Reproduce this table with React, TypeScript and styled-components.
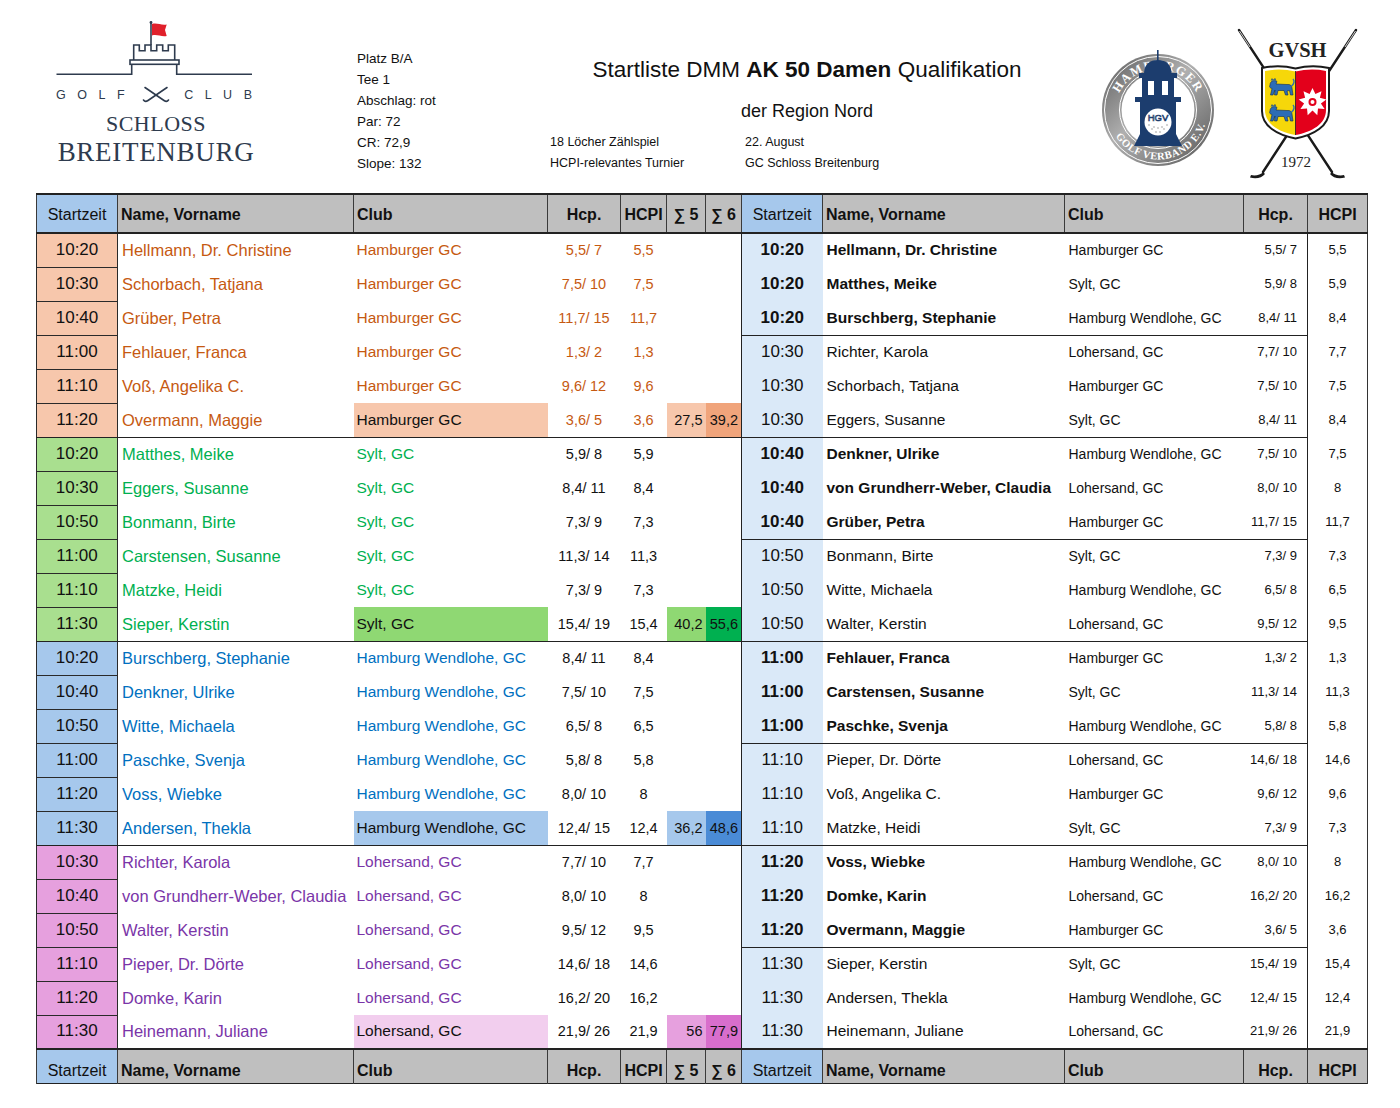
import styled, { createGlobalStyle } from "styled-components";

const GlobalStyle = createGlobalStyle`
  html, body {
    margin: 0;
    padding: 0;
    background: #ffffff;
  }
  body {
    font-family: "Liberation Sans", Arial, sans-serif;
    color: #111111;
  }
`;

type Entry = [string, string, string, string, string];

interface Tone {
  time: string;
  text: string;
  num: string;
  club: string;
  s5: string;
  s6: string;
}

const tones: Record<string, Tone> = {
  orange: { time: "#F7C7AC", text: "#C65911", num: "#C65911", club: "#F7C7AC", s5: "#F7C7AC", s6: "#F0A47B" },
  green: { time: "#A9DF8F", text: "#00B050", num: "#111111", club: "#8FD873", s5: "#8FD873", s6: "#00B050" },
  blue: { time: "#A6C8EC", text: "#0070C0", num: "#111111", club: "#A6C8EC", s5: "#A6C8EC", s6: "#4A8BD6" },
  pink: { time: "#E6A0DE", text: "#7A35A8", num: "#111111", club: "#F2CEEE", s5: "#E6A0DE", s6: "#D86ECC" },
};

const groups: { tone: Tone; rows: Entry[]; s5: string; s6: string }[] = [
  {
    tone: tones.orange,
    s5: "27,5",
    s6: "39,2",
    rows: [
      ["10:20", "Hellmann, Dr. Christine", "Hamburger GC", "5,5/ 7", "5,5"],
      ["10:30", "Schorbach, Tatjana", "Hamburger GC", "7,5/ 10", "7,5"],
      ["10:40", "Grüber, Petra", "Hamburger GC", "11,7/ 15", "11,7"],
      ["11:00", "Fehlauer, Franca", "Hamburger GC", "1,3/ 2", "1,3"],
      ["11:10", "Voß, Angelika C.", "Hamburger GC", "9,6/ 12", "9,6"],
      ["11:20", "Overmann, Maggie", "Hamburger GC", "3,6/ 5", "3,6"],
    ],
  },
  {
    tone: tones.green,
    s5: "40,2",
    s6: "55,6",
    rows: [
      ["10:20", "Matthes, Meike", "Sylt, GC", "5,9/ 8", "5,9"],
      ["10:30", "Eggers, Susanne", "Sylt, GC", "8,4/ 11", "8,4"],
      ["10:50", "Bonmann, Birte", "Sylt, GC", "7,3/ 9", "7,3"],
      ["11:00", "Carstensen, Susanne", "Sylt, GC", "11,3/ 14", "11,3"],
      ["11:10", "Matzke, Heidi", "Sylt, GC", "7,3/ 9", "7,3"],
      ["11:30", "Sieper, Kerstin", "Sylt, GC", "15,4/ 19", "15,4"],
    ],
  },
  {
    tone: tones.blue,
    s5: "36,2",
    s6: "48,6",
    rows: [
      ["10:20", "Burschberg, Stephanie", "Hamburg Wendlohe, GC", "8,4/ 11", "8,4"],
      ["10:40", "Denkner, Ulrike", "Hamburg Wendlohe, GC", "7,5/ 10", "7,5"],
      ["10:50", "Witte, Michaela", "Hamburg Wendlohe, GC", "6,5/ 8", "6,5"],
      ["11:00", "Paschke, Svenja", "Hamburg Wendlohe, GC", "5,8/ 8", "5,8"],
      ["11:20", "Voss, Wiebke", "Hamburg Wendlohe, GC", "8,0/ 10", "8"],
      ["11:30", "Andersen, Thekla", "Hamburg Wendlohe, GC", "12,4/ 15", "12,4"],
    ],
  },
  {
    tone: tones.pink,
    s5: "56",
    s6: "77,9",
    rows: [
      ["10:30", "Richter, Karola", "Lohersand, GC", "7,7/ 10", "7,7"],
      ["10:40", "von Grundherr-Weber, Claudia", "Lohersand, GC", "8,0/ 10", "8"],
      ["10:50", "Walter, Kerstin", "Lohersand, GC", "9,5/ 12", "9,5"],
      ["11:10", "Pieper, Dr. Dörte", "Lohersand, GC", "14,6/ 18", "14,6"],
      ["11:20", "Domke, Karin", "Lohersand, GC", "16,2/ 20", "16,2"],
      ["11:30", "Heinemann, Juliane", "Lohersand, GC", "21,9/ 26", "21,9"],
    ],
  },
];

const byTime: Entry[] = [
  ["10:20", "Hellmann, Dr. Christine", "Hamburger GC", "5,5/ 7", "5,5"],
  ["10:20", "Matthes, Meike", "Sylt, GC", "5,9/ 8", "5,9"],
  ["10:20", "Burschberg, Stephanie", "Hamburg Wendlohe, GC", "8,4/ 11", "8,4"],
  ["10:30", "Richter, Karola", "Lohersand, GC", "7,7/ 10", "7,7"],
  ["10:30", "Schorbach, Tatjana", "Hamburger GC", "7,5/ 10", "7,5"],
  ["10:30", "Eggers, Susanne", "Sylt, GC", "8,4/ 11", "8,4"],
  ["10:40", "Denkner, Ulrike", "Hamburg Wendlohe, GC", "7,5/ 10", "7,5"],
  ["10:40", "von Grundherr-Weber, Claudia", "Lohersand, GC", "8,0/ 10", "8"],
  ["10:40", "Grüber, Petra", "Hamburger GC", "11,7/ 15", "11,7"],
  ["10:50", "Bonmann, Birte", "Sylt, GC", "7,3/ 9", "7,3"],
  ["10:50", "Witte, Michaela", "Hamburg Wendlohe, GC", "6,5/ 8", "6,5"],
  ["10:50", "Walter, Kerstin", "Lohersand, GC", "9,5/ 12", "9,5"],
  ["11:00", "Fehlauer, Franca", "Hamburger GC", "1,3/ 2", "1,3"],
  ["11:00", "Carstensen, Susanne", "Sylt, GC", "11,3/ 14", "11,3"],
  ["11:00", "Paschke, Svenja", "Hamburg Wendlohe, GC", "5,8/ 8", "5,8"],
  ["11:10", "Pieper, Dr. Dörte", "Lohersand, GC", "14,6/ 18", "14,6"],
  ["11:10", "Voß, Angelika C.", "Hamburger GC", "9,6/ 12", "9,6"],
  ["11:10", "Matzke, Heidi", "Sylt, GC", "7,3/ 9", "7,3"],
  ["11:20", "Voss, Wiebke", "Hamburg Wendlohe, GC", "8,0/ 10", "8"],
  ["11:20", "Domke, Karin", "Lohersand, GC", "16,2/ 20", "16,2"],
  ["11:20", "Overmann, Maggie", "Hamburger GC", "3,6/ 5", "3,6"],
  ["11:30", "Sieper, Kerstin", "Sylt, GC", "15,4/ 19", "15,4"],
  ["11:30", "Andersen, Thekla", "Hamburg Wendlohe, GC", "12,4/ 15", "12,4"],
  ["11:30", "Heinemann, Juliane", "Lohersand, GC", "21,9/ 26", "21,9"],
];

const colWidths = [81, 236, 194, 73, 46, 39, 36, 81, 242, 179, 64, 60];

/* ---------- header area ---------- */

const Page = styled.div`
  width: 1400px;
  min-height: 1108px;
`;

const Top = styled.header`
  display: flex;
  height: 193px;
`;

const ClubLogo = styled.div`
  width: 200px;
  margin: 18px 101px 0 56px;
  display: flex;
  flex-direction: column;
  align-items: center;
  color: #2e3b4e;
`;

const GolfLine = styled.div`
  display: flex;
  align-items: center;
  justify-content: space-between;
  width: 196px;
  height: 18px;
  margin: 10px 4px 0 0;
  font-family: "Liberation Sans", Arial, sans-serif;
  font-size: 12.5px;
  letter-spacing: 11.5px;
  line-height: 18px;

  & > svg {
    margin-left: -8px;
  }
  & > span:last-child {
    margin-right: -11.5px;
  }
`;

const Schloss = styled.div`
  margin-top: 8px;
  font-family: "Liberation Serif", "DejaVu Serif", serif;
  font-size: 22px;
  line-height: 24px;
  letter-spacing: 0.5px;
`;

const Breitenburg = styled.div`
  margin-top: 0.5px;
  font-family: "Liberation Serif", "DejaVu Serif", serif;
  font-size: 27px;
  line-height: 30px;
  letter-spacing: 0.7px;
`;

const Info = styled.div`
  width: 192px;
  padding-top: 48px;
  font-size: 13.5px;
  line-height: 21px;
`;

const Center = styled.div`
  width: 516px;
  display: flex;
  flex-direction: column;
  align-items: center;
`;

const Title = styled.h1`
  margin: 56px 0 0;
  font-size: 22.5px;
  line-height: 28px;
  font-weight: 400;

  & b {
    font-weight: 700;
  }
`;

const Subtitle = styled.div`
  margin-top: 15px;
  font-size: 18px;
  line-height: 24px;
`;

const Facts = styled.div`
  align-self: stretch;
  display: grid;
  grid-template-columns: 195px 1fr;
  margin-top: 9px;
  padding-left: 1px;
  font-size: 12.5px;
  line-height: 21px;
`;

const Logos = styled.div`
  display: flex;
  align-items: flex-start;
  margin-left: 35px;
  gap: 20px;
`;

const HgvMark = styled.svg`
  margin-top: 50px;
`;

const GvshMark = styled.svg`
  margin-top: 26px;
`;

/* ---------- table ---------- */

const Sheet = styled.table`
  border-collapse: collapse;
  table-layout: fixed;
  width: 1331px;
  margin-left: 36px;
  border: 1px solid #333333;
  font-family: "Liberation Sans", Arial, sans-serif;
  color: #111111;
`;

const HeadRow = styled.tr<{ $foot?: boolean }>`
  height: ${(p) => (p.$foot ? 34 : 39)}px;
  border-bottom: ${(p) => (p.$foot ? "1px" : "2px")} solid #222222;
  border-top: 2px solid #222222;

  & > th {
    padding-bottom: ${(p) => (p.$foot ? 2 : 7)}px;
  }
`;

const Th = styled.th<{ $time?: boolean; $left?: boolean }>`
  padding: 0 3px;
  vertical-align: bottom;
  background: ${(p) => (p.$time ? "#A6C8EC" : "#BFBFBF")};
  border-left: 1px solid #3a3a3a;
  border-right: 1px solid #3a3a3a;
  font-size: 16px;
  line-height: 20px;
  font-weight: ${(p) => (p.$time ? 400 : 700)};
  text-align: ${(p) => (p.$left ? "left" : "center")};
  white-space: nowrap;
  overflow: hidden;
`;

const BodyRow = styled.tr<{ $leftEnd: boolean; $rightEnd: boolean }>`
  height: 34px;

  & > td:nth-child(-n + 7) {
    border-bottom: ${(p) => (p.$leftEnd ? "1px solid #222222" : "0")};
  }
  & > td:nth-child(n + 8):nth-child(-n + 11) {
    border-bottom: ${(p) => (p.$rightEnd ? "1px solid #222222" : "0")};
  }
  & > td:nth-child(7),
  & > td:nth-child(11) {
    border-right: 1px solid #222222;
  }
`;

const Cell = styled.td`
  padding: 0 4px 7px;
  vertical-align: bottom;
  white-space: nowrap;
  overflow: hidden;
  line-height: 20px;
`;

const LTime = styled(Cell)<{ $bg: string }>`
  && {
    border: 1px solid #2a2a2a;
  }
  background: ${(p) => p.$bg};
  font-size: 17px;
  text-align: center;
`;

const LName = styled(Cell)<{ $color: string }>`
  color: ${(p) => p.$color};
  font-size: 16.5px;
`;

const LClub = styled(Cell)<{ $color: string; $bg?: string }>`
  padding-left: 3px;
  color: ${(p) => (p.$bg ? "#111111" : p.$color)};
  background: ${(p) => p.$bg ?? "transparent"};
  font-size: 15.5px;
`;

const LNum = styled(Cell)<{ $color: string }>`
  color: ${(p) => p.$color};
  font-size: 14.5px;
  text-align: center;
`;

const LSum = styled(Cell)<{ $bg?: string }>`
  padding-right: 3px;
  background: ${(p) => p.$bg ?? "transparent"};
  font-size: 14.5px;
  text-align: right;
`;

const RTime = styled(Cell)<{ $bold: boolean }>`
  background: #dae9f8;
  font-size: 17px;
  font-weight: ${(p) => (p.$bold ? 700 : 400)};
  text-align: center;
`;

const RName = styled(Cell)<{ $bold: boolean }>`
  font-size: 15.5px;
  font-weight: ${(p) => (p.$bold ? 700 : 400)};
`;

const RClub = styled(Cell)`
  font-size: 14px;
`;

const RHcp = styled(Cell)`
  padding-right: 10px;
  font-size: 13px;
  text-align: right;
`;

const RHcpi = styled(Cell)`
  font-size: 13px;
  text-align: center;
`;

/* ---------- drawings ---------- */

const Castle = () => (
  <svg width="200" height="58" viewBox="0 0 200 58">
    <g fill="none" stroke="#2e3b4e" strokeWidth="1.6">
      <path d="M0.5 56.3 H75.7 V46.3 M120.7 46.3 V56.3 H196" />
      <rect x="74" y="42" width="49" height="4.3" />
      <path d="M77.7 42 V27 H83.3 V32.7 H89 V27 H95 V32.7 H100.7 V27 H106.7 V32.7 H112.3 V27 H118.7 V42" />
      <path d="M95 27 V5" />
    </g>
    <circle cx="95" cy="4.5" r="1.4" fill="#2e3b4e" />
    <path d="M96 6 C101 4.5 105 7.5 110.7 6.5 L109 12 L110.7 18 C105 19 101 16 96 17.5 Z" fill="#e0202b" />
  </svg>
);

const CrossedClubs = () => (
  <svg width="30" height="18" viewBox="0 0 30 18">
    <g fill="none" stroke="#2e3b4e" strokeWidth="1.6" strokeLinecap="round">
      <path d="M4 1.5 L23 14.5 C24.5 15.5 26.5 15.5 27.5 14" />
      <path d="M26 1.5 L7 14.5 C5.5 15.5 3.5 15.5 2.5 14" />
    </g>
  </svg>
);

const HgvLogo = () => (
  <HgvMark width="116" height="120" viewBox="0 0 116 120">
    <defs>
      <linearGradient id="hgvRing" x1="0" y1="0" x2="1" y2="1">
        <stop offset="0" stopColor="#5a5a5a" />
        <stop offset="0.45" stopColor="#b0b0b0" />
        <stop offset="0.7" stopColor="#878787" />
        <stop offset="1" stopColor="#565656" />
      </linearGradient>
      <path id="hgvTop" d="M15 62 A43 43 0 0 1 101 62" />
      <path id="hgvBottom" d="M8.5 60 A49.5 49.5 0 0 0 107.5 60" />
    </defs>
    <circle cx="58" cy="60" r="56" fill="url(#hgvRing)" />
    <circle cx="58" cy="60" r="53.5" fill="none" stroke="#ffffff" strokeWidth="1" />
    <circle cx="58" cy="60" r="38.5" fill="none" stroke="#ffffff" strokeWidth="1" />
    <circle cx="58" cy="60" r="36.5" fill="#ffffff" />
    <text fontFamily="'Liberation Serif', serif" fontWeight="700" fontSize="12.5" fill="#ffffff" letterSpacing="1.4">
      <textPath href="#hgvTop" startOffset="50%" textAnchor="middle">HAMBURGER</textPath>
    </text>
    <text fontFamily="'Liberation Serif', serif" fontWeight="700" fontSize="10.5" fill="#ffffff" letterSpacing="0.5">
      <textPath href="#hgvBottom" startOffset="54%" textAnchor="middle">GOLF VERBAND E.V.</textPath>
    </text>
    <g fill="#1c3d6e">
      <rect x="57" y="0" width="1.6" height="14" />
      <path d="M44 24 C44 14 50 10 57.8 10 C65.6 10 71.6 14 71.6 24 Z" />
      <rect x="39" y="23" width="38" height="5" />
      <rect x="42" y="28" width="32" height="20" />
      <rect x="35" y="47" width="46" height="5" />
      <path d="M40 52 H76 V84 L82 96 H34 L40 84 Z" />
    </g>
    <rect x="48" y="31" width="6" height="14" fill="#ffffff" />
    <rect x="62" y="31" width="6" height="14" fill="#ffffff" />
    <circle cx="58" cy="72" r="13.5" fill="#ffffff" />
    <g fill="#c8c8c8">
      <circle cx="52" cy="79" r="1.1" />
      <circle cx="56" cy="82" r="1.1" />
      <circle cx="60" cy="82" r="1.1" />
      <circle cx="64" cy="79" r="1.1" />
      <circle cx="49" cy="75" r="1.1" />
      <circle cx="67" cy="75" r="1.1" />
      <circle cx="54" cy="77" r="1.1" />
      <circle cx="58" cy="78" r="1.1" />
      <circle cx="62" cy="77" r="1.1" />
    </g>
    <text x="58" y="71" textAnchor="middle" fontFamily="'Liberation Sans', sans-serif" fontSize="9.5" fill="#ffffff" stroke="#1c3d6e" strokeWidth="0.7">HGV</text>
  </HgvMark>
);

const Lion = ({ x, y }: { x: number; y: number }) => (
  <g transform={`translate(${x} ${y})`}>
    <path
      d="M3 7 C3 3 7 1.5 10 3.5 L9 6 L20 6.5 C23 6 25 7.5 25 10 L26 17 L23.5 17 L22.5 12.5 L20 13 L21 17 L18.5 17 L17 12.5 L11 12.5 L10 17 L7.5 17 L8 12 L6 17 L3.5 17 L5 10.5 C3 10 2 9 3 7 Z"
      fill="#2c6cb5"
      stroke="#0f2c55"
      strokeWidth="0.6"
    />
    <path d="M24.5 8 C27 6 28 3 26 1" fill="none" stroke="#2c6cb5" strokeWidth="1.4" />
    <path d="M4 2.5 L5 0.5 L6.5 2 L8 0.3 L9 2.5" fill="#2c6cb5" stroke="#0f2c55" strokeWidth="0.4" />
  </g>
);

const nettle = (() => {
  const pts: string[] = [];
  const n = 18;
  for (let i = 0; i < n; i++) {
    const a = (i / n) * Math.PI * 2 - Math.PI / 2;
    const r = i % 2 === 0 ? 14 : 8.5;
    pts.push(`${(76.5 + Math.cos(a) * r).toFixed(1)},${(76 + Math.sin(a) * r).toFixed(1)}`);
  }
  return pts.join(" ");
})();

const GvshLogo = () => (
  <GvshMark width="124" height="160" viewBox="0 0 124 160">
    <defs>
      <clipPath id="shieldClip">
        <path d="M29 45 Q44 42 59.5 45.5 Q75 42 90 45 V84 C90 98 76 106 59.5 109 C43 106 29 98 29 84 Z" />
      </clipPath>
    </defs>
    <g fill="none" stroke="#1a1a1a" strokeWidth="2.4" strokeLinecap="round">
      <path d="M3 4 L96 146" />
      <path d="M120 4 L27 146" />
    </g>
    <g fill="none" stroke="#ffffff" strokeWidth="0.8">
      <path d="M3.5 5 L14 21" />
      <path d="M119.5 5 L109 21" />
    </g>
    <path d="M96 146 C98 149 104 150 108 149 L109 151.5 C103 153 97 152 94 148 Z" fill="#1a1a1a" />
    <path d="M27 146 C25 149 19 150 15 149 L14 151.5 C20 153 26 152 29 148 Z" fill="#1a1a1a" />
    <text x="61.5" y="30.5" textAnchor="middle" fontFamily="'Liberation Serif', serif" fontWeight="700" fontSize="20.5" fill="#222222">GVSH</text>
    <path
      d="M26 42 Q43 38.5 59.5 42.5 Q76 38.5 93 42 V85 C93 100 78 109 59.5 112.5 C41 109 26 100 26 85 Z"
      fill="#ffffff"
      stroke="#1a1a1a"
      strokeWidth="2"
    />
    <g clipPath="url(#shieldClip)">
      <rect x="28" y="40" width="31.5" height="72" fill="#f6d70a" />
      <rect x="59.5" y="40" width="32" height="72" fill="#e3001b" />
    </g>
    <path d="M59.5 45 V109" stroke="#1a1a1a" strokeWidth="0.8" />
    <Lion x={31} y={52} />
    <Lion x={31} y={78} />
    <polygon points={nettle} fill="#ffffff" />
    <circle cx="76.5" cy="76" r="4" fill="#e3001b" />
    <circle cx="76.5" cy="76" r="2" fill="#ffffff" />
    <text x="60" y="140.5" textAnchor="middle" fontFamily="'Liberation Serif', serif" fontSize="15" fill="#222222">1972</text>
  </GvshMark>
);

/* ---------- page ---------- */

const HeaderRow = ({ foot }: { foot?: boolean }) => (
  <HeadRow $foot={foot}>
    <Th $time>Startzeit</Th>
    <Th $left>Name, Vorname</Th>
    <Th $left>Club</Th>
    <Th>Hcp.</Th>
    <Th>HCPI</Th>
    <Th>∑ 5</Th>
    <Th>∑ 6</Th>
    <Th $time>Startzeit</Th>
    <Th $left>Name, Vorname</Th>
    <Th $left>Club</Th>
    <Th>Hcp.</Th>
    <Th>HCPI</Th>
  </HeadRow>
);

const App = () => {
  return (
    <>
      <GlobalStyle />
      <Page>
        <Top>
          <ClubLogo>
            <Castle />
            <GolfLine>
              <span>GOLF</span>
              <CrossedClubs />
              <span>CLUB</span>
            </GolfLine>
            <Schloss>SCHLOSS</Schloss>
            <Breitenburg>BREITENBURG</Breitenburg>
          </ClubLogo>
          <Info>
            <div>Platz B/A</div>
            <div>Tee 1</div>
            <div>Abschlag: rot</div>
            <div>Par: 72</div>
            <div>CR: 72,9</div>
            <div>Slope: 132</div>
          </Info>
          <Center>
            <Title>
              Startliste DMM <b>AK 50 Damen</b> Qualifikation
            </Title>
            <Subtitle>der Region Nord</Subtitle>
            <Facts>
              <div>18 Löcher Zählspiel</div>
              <div>22. August</div>
              <div>HCPI-relevantes Turnier</div>
              <div>GC Schloss Breitenburg</div>
            </Facts>
          </Center>
          <Logos>
            <HgvLogo />
            <GvshLogo />
          </Logos>
        </Top>

        <Sheet>
          <colgroup>
            {colWidths.map((w, i) => (
              <col key={i} style={{ width: w }} />
            ))}
          </colgroup>
          <thead>
            <HeaderRow />
          </thead>
          <tbody>
            {byTime.map((right, i) => {
              const group = groups[Math.floor(i / 6)];
              const r = i % 6;
              const [time, name, club, hcp, hcpi] = group.rows[r];
              const last = r === 5;
              const tone = group.tone;
              const bold = Math.floor(i / 3) % 2 === 0;
              return (
                <BodyRow key={i} $leftEnd={last} $rightEnd={i % 3 === 2}>
                  <LTime $bg={tone.time}>{time}</LTime>
                  <LName $color={tone.text}>{name}</LName>
                  <LClub $color={tone.text} $bg={last ? tone.club : undefined}>
                    {club}
                  </LClub>
                  <LNum $color={tone.num}>{hcp}</LNum>
                  <LNum $color={tone.num}>{hcpi}</LNum>
                  <LSum $bg={last ? tone.s5 : undefined}>{last ? group.s5 : ""}</LSum>
                  <LSum $bg={last ? tone.s6 : undefined}>{last ? group.s6 : ""}</LSum>
                  <RTime $bold={bold}>{right[0]}</RTime>
                  <RName $bold={bold}>{right[1]}</RName>
                  <RClub>{right[2]}</RClub>
                  <RHcp>{right[3]}</RHcp>
                  <RHcpi>{right[4]}</RHcpi>
                </BodyRow>
              );
            })}
          </tbody>
          <tfoot>
            <HeaderRow foot />
          </tfoot>
        </Sheet>
      </Page>
    </>
  );
};

export default App;
